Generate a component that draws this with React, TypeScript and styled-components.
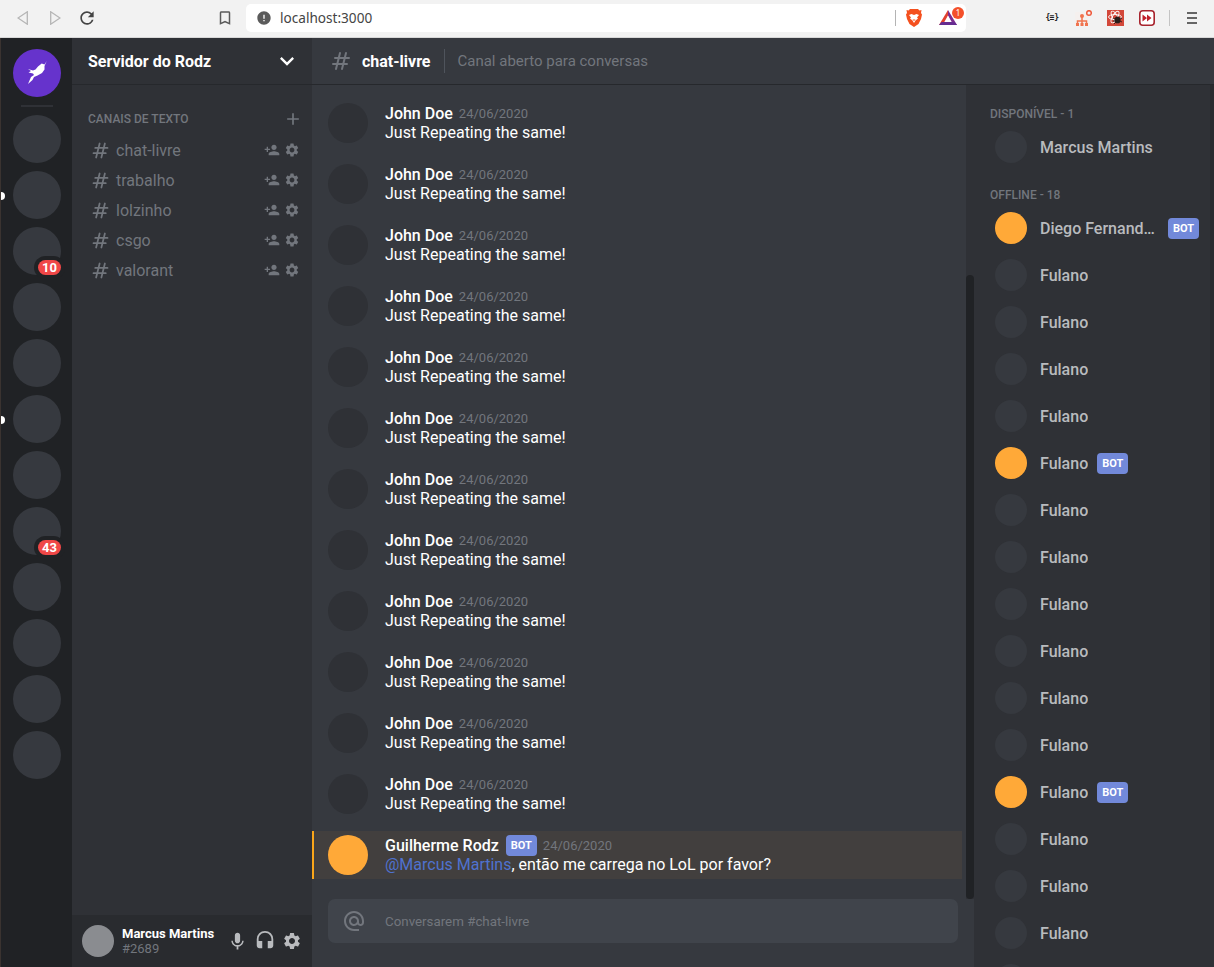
import React from "react";
import styled, { createGlobalStyle } from "styled-components";
import {
  MdAdd,
  MdAlternateEmail,
  MdExpandMore,
  MdHeadset,
  MdMic,
  MdPersonAdd,
  MdSettings,
  MdBookmarkBorder,
  MdError,
  MdRefresh,
} from "react-icons/md";
import { HiOutlineHashtag } from "react-icons/hi";

const GlobalStyle = createGlobalStyle`
  * {
    margin: 0;
    padding: 0;
    box-sizing: border-box;
  }
  html, body, #root {
    height: 100%;
    overflow: hidden;
    background: #202225;
  }
  body {
    font-family: Roboto, "Liberation Sans", sans-serif;
    -webkit-font-smoothing: antialiased;
  }
`;

const Window = styled.div`
  display: flex;
  flex-direction: column;
  height: 100vh;
`;

const BrowserBar = styled.div`
  flex: 0 0 38px;
  display: flex;
  align-items: center;
  background: #f2f2f2;
  border-bottom: 1px solid #d8d8d8;
  padding: 0 0 2px 17px;
  color: #5b5b5b;
`;

const NavButton = styled.button<{ $w: number }>`
  flex: 0 0 ${(p) => p.$w}px;
  display: flex;
  align-items: center;
  background: none;
  border: 0;
  color: inherit;
`;

const AddressBar = styled.div`
  flex: 0 0 720px;
  height: 28px;
  display: flex;
  align-items: center;
  gap: 8px;
  margin-left: 8px;
  padding: 0 9px 0 10px;
  background: #fff;
  border-radius: 5px;
  font-family: "Noto Sans", sans-serif;
  font-size: 13.6px;
  color: #444;
`;

const Url = styled.span`
  flex: 1;
`;

const BarDivider = styled.span`
  flex: 0 0 1px;
  height: 16px;
  background: #b4b4b4;
`;

const BraveIcon = styled.span`
  display: flex;
  margin-left: 2px;
`;

const AlertIcon = styled.span`
  position: relative;
  display: flex;
  margin-left: 9px;
`;

const AlertCount = styled.span`
  position: absolute;
  top: -3px;
  right: -7px;
  width: 12px;
  height: 12px;
  border-radius: 50%;
  background: #f4502a;
  color: #fff;
  font-size: 8px;
  line-height: 12px;
  text-align: center;
`;

const Extensions = styled.div`
  display: flex;
  align-items: center;
  margin-left: 78px;
  gap: 15px;
`;

const JsonExtension = styled.span`
  flex: 0 0 16px;
  color: #222;
  font-family: "DejaVu Sans Mono", monospace;
  font-size: 8px;
  font-weight: 700;
  text-align: center;
  white-space: nowrap;
  letter-spacing: -0.5px;
`;

const ExtensionDivider = styled.span`
  width: 1px;
  height: 16px;
  margin-left: -1px;
  background: #c4c4c4;
`;

const Hamburger = styled.span`
  display: flex;
  flex-direction: column;
  gap: 3px;
  width: 10px;
  margin-left: 2px;
`;

const HamburgerLine = styled.span`
  height: 2px;
  background: #666;
`;

const Grid = styled.div`
  flex: 1;
  min-height: 0;
  display: grid;
  grid-template-columns: 71px 240px 1fr 240px;
  grid-template-rows: 47px 1fr;
  border-left: 1px solid #3a3330;
`;

const ServerList = styled.div`
  grid-row: 1 / 3;
  display: flex;
  flex-direction: column;
  align-items: center;
  gap: 8px;
  padding: 11px 0 0 1px;
  background: #202225;
  overflow: hidden;
`;

const ServerIcon = styled.div<{ $brand?: boolean }>`
  position: relative;
  flex: 0 0 48px;
  width: 48px;
  height: 48px;
  display: flex;
  align-items: center;
  justify-content: center;
  border-radius: 50%;
  background: ${(p) => (p.$brand ? "#6633cc" : "#36393f")};
`;

const Separator = styled.div`
  flex: 0 0 2px;
  width: 32px;
  background: #2f3136;
`;

const Badge = styled.span`
  position: absolute;
  right: 0;
  bottom: 0;
  height: 15px;
  padding: 0 4px;
  min-width: 23px;
  border-radius: 8px;
  background: #f04747;
  color: #fff;
  font-size: 13px;
  font-weight: 700;
  line-height: 15px;
  text-align: center;
  box-shadow: 0 0 0 4px #202225;
`;

const Unread = styled.span`
  position: absolute;
  left: -12px;
  top: 21px;
  width: 4px;
  height: 8px;
  border-radius: 0 4px 4px 0;
  background: #fff;
`;

const ServerName = styled.div`
  display: flex;
  align-items: center;
  justify-content: space-between;
  padding: 0 11px 0 16px;
  background: #2f3136;
  border-bottom: 1px solid #26282c;
  color: #fff;
  font-size: 16px;
  font-weight: 700;
`;

const ChannelHeader = styled.div`
  grid-column: 3 / 5;
  display: flex;
  align-items: center;
  padding-left: 17px;
  background: #36393f;
  border-bottom: 1px solid #26282c;
  color: #72767d;
`;

const HeaderTitle = styled.h1`
  margin-left: 9px;
  color: #fff;
  font-size: 16px;
  font-weight: 700;
`;

const HeaderDivider = styled.span`
  width: 1px;
  height: 24px;
  margin: 0 13px;
  background: #4f545c;
`;

const HeaderDescription = styled.span`
  color: #72767d;
  font-size: 15px;
`;

const ChannelColumn = styled.div`
  display: flex;
  flex-direction: column;
  min-height: 0;
  background: #2f3136;
`;

const Channels = styled.div`
  flex: 1;
  padding: 25px 12px 0 16px;
`;

const CategoryRow = styled.div`
  display: flex;
  align-items: center;
  justify-content: space-between;
  height: 18px;
  margin: 0 -3px 7px 0;
  color: #72767d;
`;

const CategoryTitle = styled.span`
  font-size: 12px;
  font-weight: 500;
`;

const ChannelRow = styled.div`
  display: flex;
  align-items: center;
  height: 30px;
  padding-left: 2px;
  color: #72767d;
`;

const ChannelName = styled.span`
  flex: 1;
  margin-left: 5px;
  font-size: 16px;
`;

const ChannelActions = styled.span`
  display: flex;
  align-items: center;
  gap: 4px;
`;

const UserBar = styled.div`
  flex: 0 0 52px;
  display: flex;
  align-items: center;
  padding: 0 10px;
  background: #292b2f;
`;

const UserAvatar = styled.div`
  flex: 0 0 32px;
  height: 32px;
  border-radius: 50%;
  background: #8a8c90;
`;

const UserInfo = styled.div`
  flex: 1;
  margin-left: 8px;
`;

const UserName = styled.div`
  color: #fff;
  font-size: 13px;
  font-weight: 700;
  line-height: 15px;
`;

const UserTag = styled.div`
  color: #72767d;
  font-size: 13px;
  line-height: 15px;
`;

const UserActions = styled.div`
  display: flex;
  align-items: center;
  color: #b9bbbe;
  gap: 6px;
`;

const Main = styled.div`
  position: relative;
  display: flex;
  flex-direction: column;
  min-height: 0;
  background: #36393f;
`;

const Messages = styled.div`
  flex: 1;
  min-height: 0;
  display: flex;
  flex-direction: column;
  gap: 13px;
  margin-right: 12px;
  padding: 14px 0 20px;
  overflow: hidden;
`;

const ScrollTrack = styled.div`
  position: absolute;
  top: 0;
  right: 0;
  bottom: 68px;
  width: 8px;
  display: flex;
  align-items: flex-end;
  background: #2f3136;
`;

const ScrollThumb = styled.div`
  width: 100%;
  height: 624px;
  border-radius: 4px;
  background: #202225;
`;

const MessageRow = styled.div<{ $mention?: boolean }>`
  flex: 0 0 48px;
  display: flex;
  align-items: center;
  padding-left: 16px;
  ${(p) =>
    p.$mention &&
    `
    padding-left: 14px;
    background: #423f3e;
    border-left: 2px solid #faa61a;
  `}
`;

const MessageAvatar = styled.div<{ $bot?: boolean }>`
  flex: 0 0 40px;
  height: 40px;
  border-radius: 50%;
  background: ${(p) => (p.$bot ? "#ffa938" : "#2f3136")};
`;

const MessageBody = styled.div`
  margin-left: 17px;
`;

const MessageHead = styled.div`
  display: flex;
  align-items: center;
  height: 19px;
`;

const Author = styled.strong`
  color: #fff;
  font-size: 16px;
  font-weight: 500;
`;

const BotTag = styled.span<{ $gap: number }>`
  margin-left: ${(p) => p.$gap}px;
  padding: 0 5px;
  height: 21px;
  border-radius: 4px;
  background: #7289da;
  color: #fff;
  font-size: 11px;
  font-weight: 700;
  line-height: 21px;
`;

const MessageDate = styled.time`
  margin-left: 6px;
  color: #72767d;
  font-size: 13px;
`;

const MessageText = styled.p`
  color: #fff;
  font-size: 16px;
  line-height: 19px;
`;

const Mention = styled.span`
  color: #4f72cf;
`;

const InputWrap = styled.div`
  flex: 0 0 68px;
  padding: 0 16px;
`;

const InputBox = styled.div`
  display: flex;
  align-items: center;
  height: 44px;
  border-radius: 7px;
  background: #40444b;
  padding-left: 14px;
  color: #72767d;
`;

const Placeholder = styled.span`
  margin-left: 19px;
  font-size: 13.33px;
`;

const Members = styled.div`
  position: relative;
  min-height: 0;
  padding: 20px 0 0 16px;
  background: #2f3136;
  overflow: hidden;
`;

const MembersThumb = styled.div`
  position: absolute;
  top: 0;
  right: 0;
  width: 4px;
  height: 675px;
  background: #292b2f;
`;

const MemberGroup = styled.h2<{ $top: number }>`
  margin: ${(p) => p.$top}px 0 1px 0;
  color: #72767d;
  font-size: 12px;
  font-weight: 500;
  line-height: 18px;
`;

const MemberRow = styled.div`
  display: flex;
  align-items: center;
  height: 47px;
  padding-left: 5px;
`;

const MemberAvatar = styled.div<{ $bot?: boolean }>`
  flex: 0 0 32px;
  height: 32px;
  margin-top: -1px;
  border-radius: 50%;
  background: ${(p) => (p.$bot ? "#ffa938" : "#36393f")};
`;

const MemberName = styled.span`
  margin-left: 13px;
  max-width: 119px;
  overflow: hidden;
  white-space: nowrap;
  text-overflow: ellipsis;
  color: #b9bbbe;
  font-size: 16px;
  font-weight: 500;
`;

const servers = [
  {},
  { unread: true },
  { badge: "10" },
  {},
  {},
  { unread: true },
  {},
  { badge: "43" },
  {},
  {},
  {},
  {},
];

const channels = ["chat-livre", "trabalho", "lolzinho", "csgo", "valorant"];

const botRows = [0, 5, 12];

const Logo = () => (
  <svg width="24" height="24" viewBox="0 0 24 24" fill="#fff">
    <path d="M21.700 0 L19.500 3.500 L16.700 2.500 L13 5.500 L10.500 8.500 L8 9.500 L3 8 L6 10 L3.500 11.500 L8 12.500 L9 14 L6 16 L3 23 L7.500 19 L9 16 L12.500 14.500 L17 12 L19.500 8.500 L19.500 5 Z" />
  </svg>
);

const Brave = () => (
  <svg width="16" height="18" viewBox="0 0 16 18">
    <path fill="#f4501e" d="M4 0h8l1.500 1.500L15.500 1l-.5 3 1 1.500-1 4.500-2.500 5L8 18l-4.500-3L1 10 0 5.500 1 4 .5 1l2 .5z" />
    <path fill="#fff" d="M3 6l2.500-1L8 6l2.500-1L13 6l-2 2.500 1 1-2.500 2L8 14l-1.500-2.500-2.500-2 1-1z" />
    <path fill="#f4501e" d="M6.500 10.500h3L8 12z" />
  </svg>
);

const Triangle = () => (
  <svg width="18" height="15" viewBox="0 0 18 15">
    <path fill="#e2412f" d="M9 0 0 15h5l4-9z" />
    <path fill="#7d2c8f" d="M9 0 18 15h-5L9 6z" />
    <path fill="#662d91" d="M0 15l2.500-3h13L18 15z" />
    <path fill="#fff" d="M9 5.500 12.700 12H5.300z" />
  </svg>
);

const NetworkExtension = () => (
  <svg width="17" height="16" viewBox="0 0 17 16">
    <rect x="0" y="2" width="13" height="14" rx="1" fill="#f5f0ee" />
    <circle cx="14" cy="3" r="2.300" fill="none" stroke="#ef5a3c" strokeWidth="1.500" />
    <circle cx="7" cy="6" r="2" fill="#f0744f" />
    <path fill="none" stroke="#f0744f" strokeWidth="1.500" d="M7 7v3M2.500 14v-3h9v3M7 10v4" />
    <rect x="1" y="13" width="3" height="3" fill="#f0744f" />
    <rect x="5.500" y="13" width="3" height="3" fill="#f0744f" />
    <rect x="10" y="13" width="3" height="3" fill="#f0744f" />
  </svg>
);

const BugExtension = () => (
  <svg width="17" height="16" viewBox="0 0 17 16">
    <rect width="17" height="16" fill="#d3483a" />
    <g fill="none" stroke="#fff" strokeWidth="0.900">
      <ellipse cx="8" cy="7" rx="6.500" ry="2.500" />
      <ellipse cx="8" cy="7" rx="6.500" ry="2.500" transform="rotate(60 8 7)" />
      <ellipse cx="8" cy="7" rx="6.500" ry="2.500" transform="rotate(120 8 7)" />
    </g>
    <ellipse cx="10.500" cy="10" rx="3" ry="3.500" fill="#2a1d1a" />
    <path stroke="#2a1d1a" strokeWidth="0.900" d="M6 8l2 1M6 11h2M7 14l2-2M15 8l-2 1M15 12l-2-1" />
  </svg>
);

const ForwardExtension = () => (
  <svg width="16" height="16" viewBox="0 0 16 16">
    <rect x="0.800" y="0.800" width="14.400" height="14.400" rx="3" fill="#fff" stroke="#a8242e" strokeWidth="1.600" />
    <path fill="#c0202c" d="M3.500 4.500 8 8l-4.500 3.500zM8 4.500 12.500 8 8 11.500z" />
  </svg>
);

const App = () => (
  <Window>
    <GlobalStyle />
    <BrowserBar>
      <NavButton $w={33}>
        <svg width="11" height="14" viewBox="0 0 11 14" fill="none" stroke="#b5b5b5" strokeWidth="1.300">
          <path d="M10.300 .8v12.400L1 7z" />
        </svg>
      </NavButton>
      <NavButton $w={27}>
        <svg width="11" height="14" viewBox="0 0 11 14" fill="none" stroke="#b5b5b5" strokeWidth="1.300">
          <path d="M.7 .8v12.400L10 7z" />
        </svg>
      </NavButton>
      <NavButton $w={139}>
        <MdRefresh size={20} color="#444" />
      </NavButton>
      <NavButton $w={22}>
        <MdBookmarkBorder size={18} />
      </NavButton>
      <AddressBar>
        <MdError size={16} color="#5b5b5b" />
        <Url>localhost:3000</Url>
        <BarDivider />
        <BraveIcon>
          <Brave />
        </BraveIcon>
        <AlertIcon>
          <Triangle />
          <AlertCount>1</AlertCount>
        </AlertIcon>
      </AddressBar>
      <Extensions>
        <JsonExtension>{"{≡}"}</JsonExtension>
        <NetworkExtension />
        <BugExtension />
        <ForwardExtension />
        <ExtensionDivider />
        <Hamburger>
          <HamburgerLine />
          <HamburgerLine />
          <HamburgerLine />
        </Hamburger>
      </Extensions>
    </BrowserBar>
    <Grid>
      <ServerList>
        <ServerIcon $brand>
          <Logo />
        </ServerIcon>
        <Separator />
        {servers.map((s, i) => (
          <ServerIcon key={i}>
            {s.unread && <Unread />}
            {s.badge && <Badge>{s.badge}</Badge>}
          </ServerIcon>
        ))}
      </ServerList>
      <ServerName>
        Servidor do Rodz
        <MdExpandMore size={28} />
      </ServerName>
      <ChannelHeader>
        <HiOutlineHashtag size={24} />
        <HeaderTitle>chat-livre</HeaderTitle>
        <HeaderDivider />
        <HeaderDescription>Canal aberto para conversas</HeaderDescription>
      </ChannelHeader>
      <ChannelColumn>
        <Channels>
          <CategoryRow>
            <CategoryTitle>CANAIS DE TEXTO</CategoryTitle>
            <MdAdd size={20} />
          </CategoryRow>
          {channels.map((c) => (
            <ChannelRow key={c}>
              <HiOutlineHashtag size={21} />
              <ChannelName>{c}</ChannelName>
              <ChannelActions>
                <MdPersonAdd size={16} />
                <MdSettings size={16} />
              </ChannelActions>
            </ChannelRow>
          ))}
        </Channels>
        <UserBar>
          <UserAvatar />
          <UserInfo>
            <UserName>Marcus Martins</UserName>
            <UserTag>#2689</UserTag>
          </UserInfo>
          <UserActions>
            <MdMic size={21} />
            <MdHeadset size={22} />
            <MdSettings size={20} />
          </UserActions>
        </UserBar>
      </ChannelColumn>
      <Main>
        <Messages>
          {Array.from({ length: 12 }).map((_, i) => (
            <MessageRow key={i}>
              <MessageAvatar />
              <MessageBody>
                <MessageHead>
                  <Author>John Doe</Author>
                  <MessageDate>24/06/2020</MessageDate>
                </MessageHead>
                <MessageText>Just Repeating the same!</MessageText>
              </MessageBody>
            </MessageRow>
          ))}
          <MessageRow $mention>
            <MessageAvatar $bot />
            <MessageBody>
              <MessageHead>
                <Author>Guilherme Rodz</Author>
                <BotTag $gap={7}>BOT</BotTag>
                <MessageDate>24/06/2020</MessageDate>
              </MessageHead>
              <MessageText>
                <Mention>@Marcus Martins</Mention>, então me carrega no LoL por favor?
              </MessageText>
            </MessageBody>
          </MessageRow>
        </Messages>
        <ScrollTrack>
          <ScrollThumb />
        </ScrollTrack>
        <InputWrap>
          <InputBox>
            <MdAlternateEmail size={24} />
            <Placeholder>Conversarem #chat-livre</Placeholder>
          </InputBox>
        </InputWrap>
      </Main>
      <Members>
        <MembersThumb />
        <MemberGroup $top={0}>DISPONÍVEL - 1</MemberGroup>
        <MemberRow>
          <MemberAvatar />
          <MemberName>Marcus Martins</MemberName>
        </MemberRow>
        <MemberGroup $top={15}>OFFLINE - 18</MemberGroup>
        <MemberRow>
          <MemberAvatar $bot />
          <MemberName>Diego Fernandes</MemberName>
          <BotTag $gap={9}>BOT</BotTag>
        </MemberRow>
        {Array.from({ length: 15 }).map((_, i) => {
          const bot = botRows.includes(i + 1);
          return (
            <MemberRow key={i}>
              <MemberAvatar $bot={bot} />
              <MemberName>Fulano</MemberName>
              {bot && <BotTag $gap={9}>BOT</BotTag>}
            </MemberRow>
          );
        })}
        <MemberRow>
          <MemberAvatar />
        </MemberRow>
      </Members>
    </Grid>
  </Window>
);

export default App;
